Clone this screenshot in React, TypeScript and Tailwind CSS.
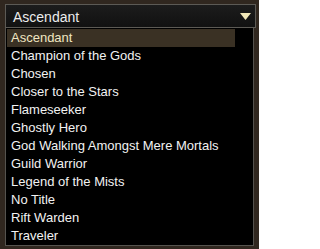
const titles = [
  "Ascendant",
  "Champion of the Gods",
  "Chosen",
  "Closer to the Stars",
  "Flameseeker",
  "Ghostly Hero",
  "God Walking Amongst Mere Mortals",
  "Guild Warrior",
  "Legend of the Mists",
  "No Title",
  "Rift Warden",
  "Traveler",
];

export default function App() {
  const selected = "Ascendant";
  return (
    <div className="w-[259px] h-[249px] bg-[#30271f] pt-[4px] pl-[5px] font-['Liberation_Sans',Arial,sans-serif]">
      <div className="w-[251px] h-[24px] flex items-center justify-between border border-[#5c5a55] bg-gradient-to-b from-[#1c1c1c] to-[#111111] pl-[7px] pr-[4px]">
        <span className="text-[14px] text-[#ececec] leading-none pt-[1px]">{selected}</span>
        <svg width="11" height="7" viewBox="0 0 11 7">
          <path d="M0 0 H11 L5.5 7 Z" fill="#f1e7b8" />
        </svg>
      </div>
      <ul className="w-[249px] h-[218px] border border-t-0 border-[#55534e] bg-black pt-[1px] pl-[1px]">
        {titles.map((t) => (
          <li
            key={t}
            className={
              t === selected
                ? "h-[18px] w-[228px] flex items-center pl-[4px] bg-[#3a3124] text-[13px] text-[#f0e6c2]"
                : "h-[18px] w-[228px] flex items-center pl-[4px] text-[13px] text-[#f2f2f2]"
            }
          >
            {t}
          </li>
        ))}
      </ul>
    </div>
  );
}
